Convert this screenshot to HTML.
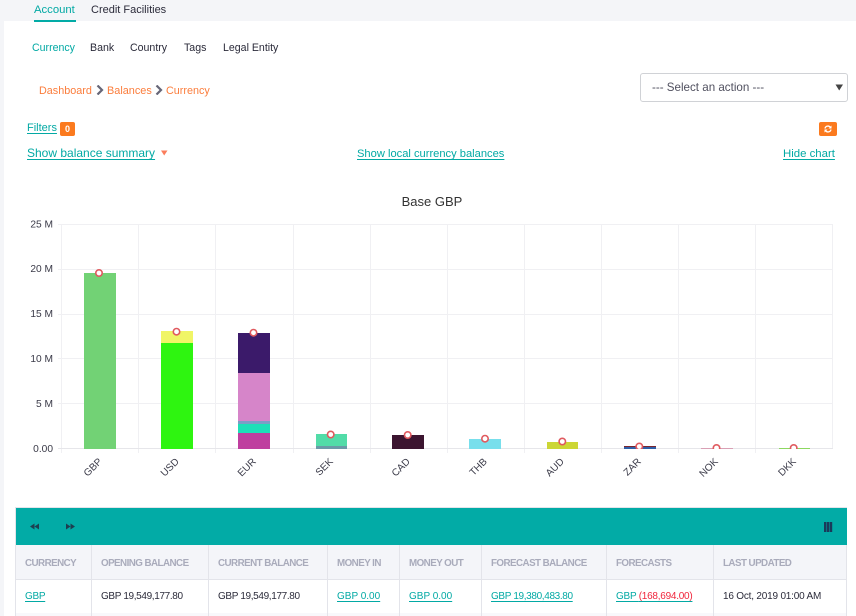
<!DOCTYPE html>
<html><head><meta charset="utf-8">
<style>
html,body{margin:0;padding:0;width:856px;height:616px;overflow:hidden;background:#fff}
body{font-family:"Liberation Sans",sans-serif;font-size:11px;color:#2b2b3a;position:relative}
.a{position:absolute;white-space:nowrap;line-height:14px}
.l{color:#02a9a4;text-decoration:underline;text-underline-offset:2px}
.o{color:#fb7d3c}
.h{color:#a9abbb;font-weight:bold;font-size:9.8px;letter-spacing:-.55px;top:557px}
.c{top:590px;font-size:10px}
.v{position:absolute;top:545px;width:1px;height:71px;background:#e3e4ea}
</style></head><body>
<div class="a" style="left:0;top:0;width:856px;height:21px;background:#f4f5f8"></div>
<div class="a" style="left:0;top:0;width:4px;height:616px;background:#f4f5f8"></div>

<div class="a" style="left:34px;top:3px;color:#02a9a4;font-size:11.300px">Account</div>
<div class="a" style="left:34px;top:20px;width:42px;height:2px;background:#02aba6"></div>
<div class="a" style="left:91px;top:3px;font-size:11px">Credit Facilities</div>

<div class="a" style="left:32px;top:41px;color:#02a9a4;font-size:10.6px">Currency</div>
<div class="a" style="left:90px;top:41px;font-size:10.6px">Bank</div>
<div class="a" style="left:130px;top:41px;font-size:10.6px">Country</div>
<div class="a" style="left:184px;top:41px;font-size:10.6px">Tags</div>
<div class="a" style="left:223px;top:41px;font-size:10.6px">Legal Entity</div>

<div class="a o" style="left:39px;top:84px;font-size:10.800px">Dashboard</div>
<svg class="a" style="left:96px;top:85px" width="8" height="10"><path d="M1.5 0.5L6 5L1.5 9.500" fill="none" stroke="#667" stroke-width="2.200"/></svg>
<div class="a o" style="left:107px;top:84px;font-size:10.900px">Balances</div>
<svg class="a" style="left:155px;top:85px" width="8" height="10"><path d="M1.5 0.5L6 5L1.5 9.500" fill="none" stroke="#667" stroke-width="2.200"/></svg>
<div class="a o" style="left:166px;top:84px;font-size:10.800px">Currency</div>

<div class="a" style="left:640px;top:73px;width:206px;height:27px;border:1px solid #d0d2d6;border-radius:3px;box-sizing:content-box"></div>
<div class="a" style="left:652px;top:81px;font-size:11.600px;color:#50505f">--- Select an action ---</div>
<svg class="a" style="left:835px;top:84px" width="9" height="8"><path d="M0.5 0.5H8L4.2 6.500Z" fill="#444"/></svg>

<div class="a l" style="left:27px;top:121px;font-size:11px">Filters</div>
<div class="a" style="left:60px;top:122px;width:15px;height:14px;background:#fb7a1e;border-radius:2px;color:#fff;font-size:9px;font-weight:bold;text-align:center">0</div>
<div class="a" style="left:819px;top:122px;width:18px;height:14px;background:#fb7a1e;border-radius:2px"></div>
<svg class="a" style="left:824px;top:125px" width="8" height="8"><path d="M1 3.500A3 3 0 0 1 6.500 2.500M7 4.500A3 3 0 0 1 1.500 5.500" fill="none" stroke="#fff" stroke-width="1.300"/><path d="M7.500 0.500V3.500H4.500ZM0.500 7.500V4.500H3.500Z" fill="#fff"/></svg>

<div class="a l" style="left:27px;top:146px;font-size:12px">Show balance summary</div>
<svg class="a" style="left:161px;top:150px" width="7" height="6"><path d="M0 0.500H6.500L3.200 5.500Z" fill="#fb7d5c"/></svg>
<div class="a l" style="left:357px;top:147px;font-size:11.150px">Show local currency balances</div>
<div class="a l" style="left:783px;top:147px;font-size:11.400px">Hide chart</div>

<div class="a" style="left:0;width:864px;top:195px;text-align:center;font-size:13px;color:#333">Base GBP</div>

<svg class="a" style="left:0;top:210px" width="856" height="280">
<g transform="translate(0,-210)">
<g stroke="#f0f0f3" stroke-width="1" shape-rendering="crispEdges">
<path d="M61.500 224V453M138.500 224V453M215.500 224V453M293.500 224V453M370.500 224V453M447.500 224V453M524.500 224V453M601.500 224V453M678.500 224V453M755.500 224V453M832.500 224V449"/>
<path d="M58 224.500H833M58 269.500H833M58 314.500H833M58 358.500H833M58 403.500H833"/>
<path d="M58 448.500H833" stroke="#e6e6ea"/>
</g>
<g font-family="Liberation Sans" font-size="10.200" fill="#3a3a48" text-anchor="end">
<text x="53" y="227.500">25 M</text><text x="53" y="272">20 M</text><text x="53" y="317">15 M</text><text x="53" y="362">10 M</text><text x="53" y="407">5 M</text><text x="53" y="452">0.00</text>
</g>
<g shape-rendering="crispEdges">
<rect x="84" y="273" width="32" height="176" fill="#72d275"/>
<rect x="161" y="331" width="32" height="12" fill="#f0f566"/>
<rect x="161" y="343" width="32" height="106" fill="#2ef510"/>
<rect x="238" y="333" width="32" height="40" fill="#3b1a6a"/>
<rect x="238" y="373" width="32" height="48" fill="#d685c9"/>
<rect x="238" y="421" width="32" height="3" fill="#7a9fc6"/>
<rect x="238" y="424" width="32" height="9" fill="#1de0b8"/>
<rect x="238" y="433" width="32" height="16" fill="#bf3f9f"/>
<rect x="316" y="434" width="31" height="12" fill="#52dca8"/>
<rect x="316" y="446" width="31" height="3" fill="#6b9aa8"/>
<rect x="392" y="435" width="32" height="14" fill="#3c1530"/>
<rect x="469" y="439" width="32" height="10" fill="#78dfec"/>
<rect x="547" y="442" width="31" height="7" fill="#ccd635"/>
<rect x="624" y="446" width="32" height="1.500" fill="#7a2630"/>
<rect x="624" y="447" width="32" height="2" fill="#2f5fa8"/>
<rect x="701" y="448" width="32" height="1" fill="#d9a0b5"/>
<rect x="779" y="448" width="31" height="1" fill="#8cd860"/>
</g>
<defs><clipPath id="cp"><rect x="55" y="220" width="780" height="229"/></clipPath></defs>
<g fill="#fff" stroke="#e05a5f" stroke-width="1.600" clip-path="url(#cp)">
<circle cx="99" cy="273" r="3.200"/><circle cx="176.500" cy="331.700" r="3.200"/><circle cx="253.500" cy="332.700" r="3.200"/><circle cx="330.700" cy="434.500" r="3.200"/><circle cx="407.700" cy="435" r="3.200"/><circle cx="485" cy="438.700" r="3.200"/><circle cx="562.300" cy="441.500" r="3.200"/><circle cx="639.300" cy="446.500" r="3.200"/><circle cx="716.500" cy="448" r="3.200"/><circle cx="793.700" cy="448" r="3.200"/>
</g>
<g font-family="Liberation Sans" font-size="10" fill="#3a3a48" text-anchor="end">
<text transform="translate(100.500,460) rotate(-45)" x="0" y="3">GBP</text>
<text transform="translate(177.500,460) rotate(-45)" x="0" y="3">USD</text>
<text transform="translate(254.500,460) rotate(-45)" x="0" y="3">EUR</text>
<text transform="translate(331.500,460) rotate(-45)" x="0" y="3">SEK</text>
<text transform="translate(408.500,460) rotate(-45)" x="0" y="3">CAD</text>
<text transform="translate(485.500,460) rotate(-45)" x="0" y="3">THB</text>
<text transform="translate(562.500,460) rotate(-45)" x="0" y="3">AUD</text>
<text transform="translate(639.500,460) rotate(-45)" x="0" y="3">ZAR</text>
<text transform="translate(716.500,460) rotate(-45)" x="0" y="3">NOK</text>
<text transform="translate(794.500,460) rotate(-45)" x="0" y="3">DKK</text>
</g>
</g>
</svg>

<div class="a" style="left:15px;top:507px;width:832px;height:109px;border:1px solid #e3e4ea;border-bottom:0;box-sizing:border-box"></div>
<div class="a" style="left:16px;top:508px;width:831px;height:37px;background:#02aba6"></div>
<svg class="a" style="left:30px;top:523px" width="50" height="7" fill="#1d3f50"><path d="M0 3.500L4.500 0.500V6.500ZM4.500 3.500L9 0.500V6.500ZM36 0.500L40.500 3.500L36 6.500ZM40.500 0.500L45 3.500L40.500 6.500Z"/></svg>
<svg class="a" style="left:823px;top:521px" width="10" height="12" fill="#1a3a5a"><rect x="1" y="1" width="2.400" height="10"/><rect x="3.900" y="1" width="2.400" height="10"/><rect x="6.800" y="1" width="2.400" height="10"/></svg>

<div class="a" style="left:16px;top:545px;width:831px;height:34px;background:#f4f5f9"></div>
<div class="a" style="left:16px;top:579px;width:831px;height:1px;background:#e3e4ea"></div>
<div class="a" style="left:16px;top:613px;width:831px;height:3px;background:#f8f8fb"></div>
<div class="v" style="left:91px"></div><div class="v" style="left:208px"></div><div class="v" style="left:327px"></div><div class="v" style="left:399px"></div><div class="v" style="left:481px"></div><div class="v" style="left:606px"></div><div class="v" style="left:713px"></div><div class="v" style="left:846px"></div>

<div class="a h" style="left:25px">CURRENCY</div>
<div class="a h" style="left:101px">OPENING BALANCE</div>
<div class="a h" style="left:218px">CURRENT BALANCE</div>
<div class="a h" style="left:337px">MONEY IN</div>
<div class="a h" style="left:409px">MONEY OUT</div>
<div class="a h" style="left:491px">FORECAST BALANCE</div>
<div class="a h" style="left:616px">FORECASTS</div>
<div class="a h" style="left:723px">LAST UPDATED</div>

<div class="a c l" style="left:25px;letter-spacing:-.3px">GBP</div>
<div class="a c" style="left:101px;letter-spacing:-.35px">GBP 19,549,177.80</div>
<div class="a c" style="left:218px;letter-spacing:-.35px">GBP 19,549,177.80</div>
<div class="a c l" style="left:337px">GBP 0.00</div>
<div class="a c l" style="left:409px">GBP 0.00</div>
<div class="a c l" style="left:491px;letter-spacing:-.35px">GBP 19,380,483.80</div>
<div class="a c l" style="left:616px;letter-spacing:-.25px">GBP <span style="color:#f0263c">(168,694.00)</span></div>
<div class="a c" style="left:723px;letter-spacing:-.2px">16 Oct, 2019 01:00 AM</div>
</body></html>
